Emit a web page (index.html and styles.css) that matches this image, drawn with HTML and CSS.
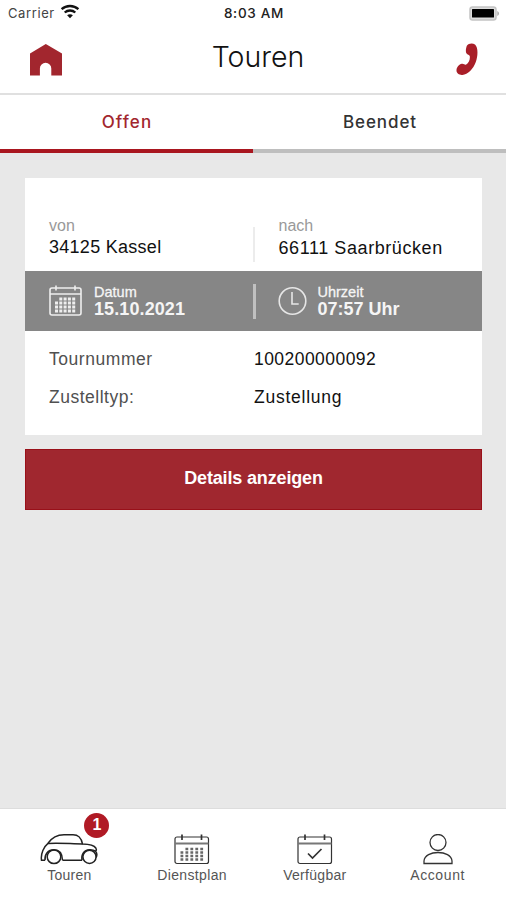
FILE: index.html
```html
<!DOCTYPE html>
<html lang="de">
<head>
<meta charset="utf-8">
<title>Touren</title>
<link rel="stylesheet" href="styles.css">
</head>
<body>
<div class="app">
  <div class="status">
    <div class="carrier"><span>Carrier</span>
      <svg width="20" height="15" viewBox="0 0 20 15" fill="none" stroke="#111" stroke-width="2.3"><path d="M1.600 5.200C6.300.9 13.700.9 18.400 5.200M4.700 8.500c3-2.700 7.600-2.700 10.600 0"/><path d="M10 14.200l-2.900-2.900c1.600-1.400 4.200-1.400 5.800 0z" fill="#111" stroke="none"/></svg>
    </div>
    <div class="clock">8:03 AM</div>
    <svg class="battery" width="31" height="15" viewBox="0 0 31 15"><rect x="1" y="1" width="26" height="13" rx="2.500" fill="#ddd" stroke="#c4c4c4" stroke-width="1.500"/><rect x="3" y="3" width="22" height="8.500" rx=".5" fill="#000"/><path d="M28.300 5v5q1.700-.8 1.700-2.500T28.300 5z" fill="#aaa"/></svg>
  </div>
  <header class="header">
    <svg class="home" width="32" height="32" viewBox="0 0 32 32"><path d="M0 9.500L15.800 0 32 9.500V31.500H21.300V24.500a5.700 5.700 0 0 0-11.400 0V31.500H0z" fill="#a2262e"/></svg>
    <h1>Touren</h1>
    <svg class="phone" width="22" height="33" viewBox="0 0 22 33"><path d="M11 2.500C12.300.3 16.700-.2 19 1.500c3.300 3 3 11.500.8 17.600-2.500 7-8 12.700-13.400 12.900C3.300 32.300.2 30.300.5 27.200c.1-2.800 2.600-5.900 5.300-6.400 2.200-.3 3 1.400 4.400.7 2.600-1.400 4-5.300 3.600-8.300-.4-1.700-2.400-1.100-3.400-2.900-1.100-1.900-.300-5.900.6-7.800z" fill="#a91e28"/></svg>
  </header>
  <nav class="tabs"><div class="tab active">Offen</div><div class="tab ended">Beendet</div></nav>
  <main class="content">
    <section class="card">
      <div class="route">
        <div class="place from"><small>von</small><span>34125 Kassel</span></div>
        <div class="divider"></div>
        <div class="place to"><small>nach</small><span>66111 Saarbrücken</span></div>
      </div>
      <div class="when">
        <div class="slot date">
          <svg width="34" height="32" viewBox="0 0 34 32" fill="none" stroke="#eee" stroke-width="1.600"><rect x="1" y="3" width="31" height="27" rx="2"/><path d="M1 9h31M7 .5v5M26 .5v5"/><path d="M10.300 14h17M6 18h21.300M6 22h21.300M6 26h21.300" stroke-width="2.800" stroke-dasharray="3 1.300"/></svg>
          <div class="label"><small>Datum</small><b class="day">15.10.2021</b></div>
        </div>
        <div class="divider"></div>
        <div class="slot time">
          <svg width="30" height="30" viewBox="0 0 30 30" fill="none" stroke="#e6e6e6" stroke-width="1.600"><circle cx="14.500" cy="15" r="13.300"/><path d="M14 6v12h6.700"/></svg>
          <div class="label"><small>Uhrzeit</small><b>07:57 Uhr</b></div>
        </div>
      </div>
      <dl class="facts">
        <dt class="number">Tournummer</dt><dd class="digits">100200000092</dd>
        <dt class="type">Zustelltyp:</dt><dd class="delivery">Zustellung</dd>
      </dl>
    </section>
    <button class="details">Details anzeigen</button>
  </main>
  <footer class="bottom">
    <div class="item tours">
      <div class="icon">
        <svg width="58" height="32" viewBox="0 0 58 32" fill="none" stroke="#222" stroke-width="1.500"><path d="M5 26.300H1.500C.5 19.500 4 12.500 8 9.300 12 3.500 17.500.8 24 .8h9c5 0 8 2 9.500 9.200 5.500.2 11.500 1 13.300 4 .900 1.700.5 2.700-.3 3.200 1.500 1.500 1.500 4.300.6 6.300"/><path d="M8 9.500c11-.8 23 .4 34.500.5M22.500 26.300h19.500"/><path d="M5 26.300C4.500 20 8 15.800 14 15.800S22.300 20 22.500 26.300M42 26.300c-1-6 2-10.300 7.500-10.500 2.500-.1 4.500.3 6 1.400"/><circle cx="14" cy="22.800" r="6.800"/><circle cx="49.500" cy="22.800" r="6.600"/></svg>
        <span class="badge">1</span>
      </div><span class="name">Touren</span>
    </div>
    <div class="item plan">
      <div class="icon"><svg width="36" height="32" viewBox="0 0 36 32" fill="none" stroke="#333" stroke-width="1.200"><rect x="1" y="3" width="33.500" height="26.500" rx="2"/><path d="M1 9.500h33.500" stroke="#777" stroke-width="2"/><path d="M8 .5v5.500M27.500 .5v5.500" stroke-width="1.700"/><path d="M11.450 15h18M6.500 18.500h23M6.500 22h23M6.500 25.500h23" stroke="#666" stroke-width="2.400" stroke-dasharray="2.800 2.150"/></svg></div>
      <span class="name">Dienstplan</span>
    </div>
    <div class="item available">
      <div class="icon"><svg width="36" height="32" viewBox="0 0 36 32" fill="none" stroke="#333" stroke-width="1.200"><rect x="1" y="3" width="33.500" height="26.500" rx="2"/><path d="M1 9.500h33.500" stroke="#777" stroke-width="2"/><path d="M8 .5v5.500M27.500 .5v5.500" stroke-width="1.700"/><path d="M11 19.500l4.500 4.500 9-9" stroke-width="1.700"/></svg></div>
      <span class="name">Verfügbar</span>
    </div>
    <div class="item account">
      <div class="icon"><svg width="30" height="32" viewBox="0 0 30 32" fill="none" stroke="#333" stroke-width="1.300"><circle cx="15" cy="8.500" r="8"/><path d="M1 29.500V27C1.500 21.500 8 18.500 15 18.500s13.500 3 14 8.500v2.500z"/></svg></div>
      <span class="name">Account</span>
    </div>
  </footer>
</div>
</body>
</html>
```
FILE: styles.css
```css
* { box-sizing: border-box; }
body { margin: 0; font-family: "Liberation Sans", Arial, sans-serif; color: #222; }
.app { width: 506px; height: 900px; display: flex; flex-direction: column; background: #fff; overflow: hidden; }
svg { display: block; flex: none; }

.status { height: 26px; display: grid; grid-template-columns: 1fr auto 1fr; align-items: center; padding: 0 6px 0 8px; font-family: Inter, sans-serif; font-size: 13px; }
.carrier { display: flex; align-items: center; gap: 5px; color: #444; letter-spacing: .6px; }
.carrier svg { margin-bottom: 3px; }
.clock { font-size: 13.500px; font-weight: 500; letter-spacing: .7px; }
.battery { justify-self: end; }

.header { height: 69px; display: flex; justify-content: space-between; align-items: flex-start; padding: 17px 28px 0 30px; border-bottom: 2px solid #e0e0e0; }
.home { margin-top: 1px; }
h1 { margin: -2px 2px 0 0; font: 300 28.500px/32px Inter, sans-serif; color: #111; }

.tabs { height: 58px; display: flex; font: 500 17px/54px Inter, sans-serif; text-align: center; }
.tab { flex: 1; border-bottom: 4px solid #bebebe; }
.active { color: #a2262e; border-color: #a9161f; letter-spacing: 1.100px; padding-left: 1px; }
.ended { letter-spacing: .9px; color: #333; padding-left: 1px; }

.content { flex: 1; background: #e8e8e8; padding: 25px 24px 0 25px; }
.card { height: 257px; background: #fff; }
.route { height: 93px; display: flex; align-items: flex-end; }
.place { flex: 1; display: flex; flex-direction: column; height: 56px; padding-left: 24px; }
.place small { font-size: 16px; line-height: 22px; color: #999; }
.place span { font-size: 18px; line-height: 20px; color: #111; white-space: nowrap; }
.from span { letter-spacing: .28px; }
.to span { letter-spacing: .58px; line-height: 22px; }
.divider { width: 2px; height: 35px; background: #ececec; flex: none; }
.route .divider { margin-bottom: 9px; }

.when { height: 60px; display: flex; align-items: center; background: #868686; color: #f5f5f5; }
.when .divider { width: 3px; background: #c0c0c0; margin-left: -1px; }
.slot { flex: 1; display: flex; align-items: center; gap: 11px; padding-left: 24px; }
.time { padding-left: 22px; gap: 10px; }
.label { display: flex; flex-direction: column; }
.label small { font-size: 14.500px; line-height: 15px; -webkit-text-stroke: .3px #f5f5f5; }
.label b { font-size: 18px; line-height: 18px; }
.day { letter-spacing: .1px; }

.facts { margin: 0; padding: 9px 24px; display: grid; grid-template-columns: 205px 1fr; grid-auto-rows: 38px; line-height: 38px; font-size: 17.500px; }
dd { margin: 0; color: #111; }
dt { color: #505050; }
.number { letter-spacing: .55px; }
.type { letter-spacing: .5px; }
.digits { letter-spacing: .45px; }
.delivery { letter-spacing: .75px; }

.details { display: block; width: 457px; height: 61px; margin: 14px 0 0; padding: 0 0 2px; border: 1px solid #991019; background: #a0272f; color: #fff; font: bold 18px "Liberation Sans", Arial, sans-serif; letter-spacing: -.15px; }

.bottom { height: 92px; display: flex; padding: 25px 7px 0 8px; font-size: 14px; color: #555; border-top: 1px solid #ddd; }
.item { flex: 1; display: flex; flex-direction: column; align-items: center; }
.icon { position: relative; height: 32px; }
.name { line-height: 18px; }
.tours .name { letter-spacing: .2px; }
.plan .name { letter-spacing: .35px; }
.available .name { letter-spacing: .3px; }
.account .name { letter-spacing: .6px; }
.badge { position: absolute; left: 44px; top: -21px; width: 25px; height: 25px; border-radius: 50%; background: #b01a25; color: #fff; font: bold 16px/24px "Liberation Sans", sans-serif; text-align: center; }
```
